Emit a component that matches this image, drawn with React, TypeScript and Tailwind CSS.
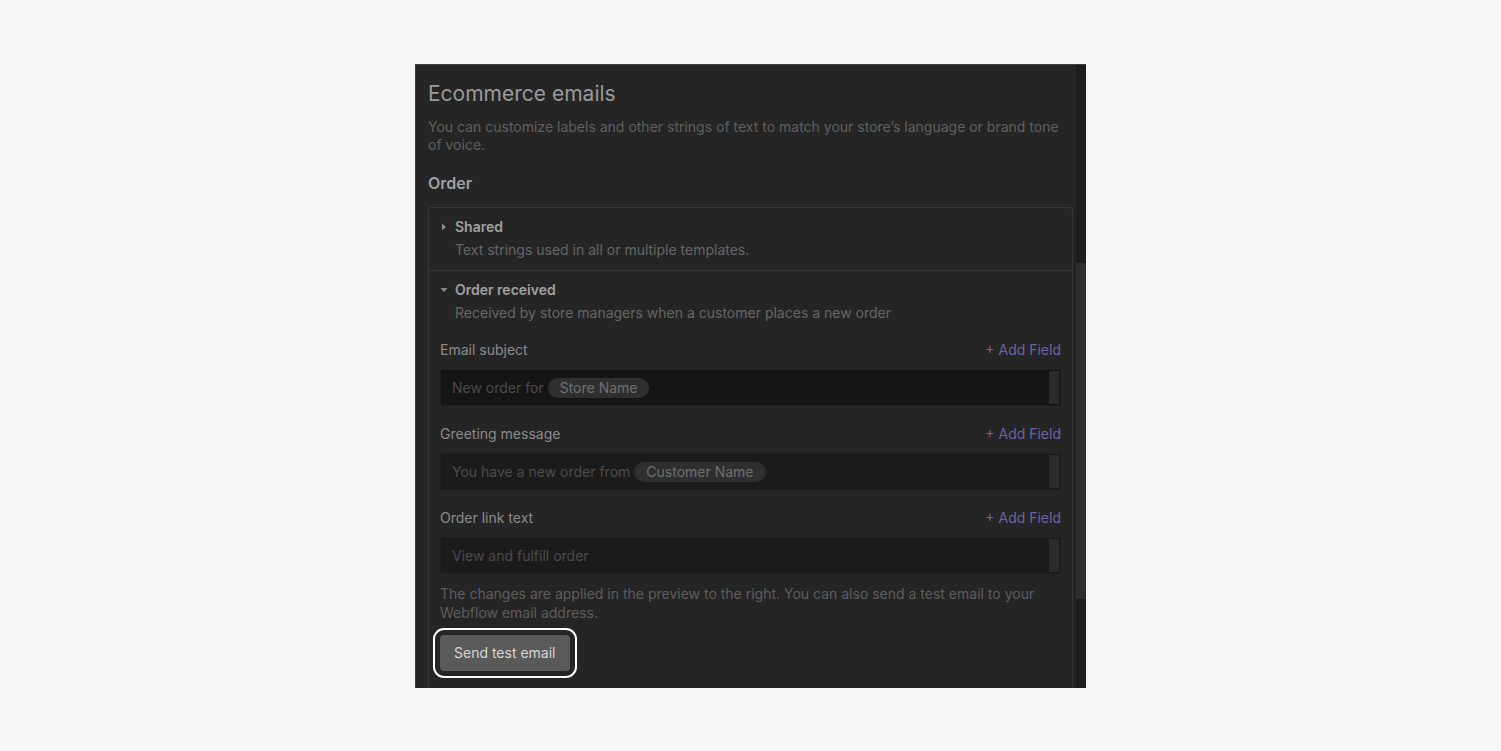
import { ReactNode } from 'react'

function Caret({ open }: { open?: boolean }) {
  return (
    <svg width="8" height="8" viewBox="0 0 8 8" className="shrink-0 text-[#8a8a8a]">
      {open ? <path d="M0.5 2 L7.5 2 L4 6 Z" fill="currentColor" /> : <path d="M2 0.5 L6 4 L2 7.5 Z" fill="currentColor" />}
    </svg>
  )
}

function Pill({ children }: { children: ReactNode }) {
  return (
    <span className="ml-1 inline-flex h-[20px] items-center rounded-full bg-[#2f2f2f] px-3 text-[#6f6f6f]">{children}</span>
  )
}

function Field({ label, dark, children }: { label: string; dark?: boolean; children: ReactNode }) {
  return (
    <div>
      <div className="flex h-5 items-center justify-between text-sm leading-5">
        <span className="text-[#8b8b8b]">{label}</span>
        <span className="text-[#6c63a6]">+ Add Field</span>
      </div>
      <div
        className={`mt-[9px] flex h-[37px] items-center rounded-[2px] border border-[#1f1f1f] pl-[11px] pr-[1px] text-sm ${
          dark ? 'bg-[#151515]' : 'bg-[#1b1b1b]'
        }`}
      >
        <div className="flex flex-1 items-center text-[#4b4b4b]">{children}</div>
        <div className="h-[33px] w-[10px] rounded-[1px] bg-[#2b2b2b]" />
      </div>
    </div>
  )
}

export default function App() {
  return (
    <div
      className="flex h-[751px] w-full items-start justify-center bg-[#f5f6f8] pt-16"
      style={{ fontFamily: 'Inter, "Noto Sans", sans-serif' }}
    >
      <div className="flex h-[624px] w-[671px] overflow-hidden border-t border-l border-[#3c3c3c] bg-[#252525]">
        <div className="flex-1 pl-3 pr-[1px] pt-[15px]">
          <h1 className="text-[21px] leading-7 text-[#9a9a9a]">Ecommerce emails</h1>
          <p className="mt-[10px] pr-3 text-sm leading-[18px] text-[#5f5f5f]">
            You can customize labels and other strings of text to match your store’s language or brand tone of voice.
          </p>
          <h2 className="mt-[17px] text-base font-semibold leading-6 text-[#a0a0a0]">Order</h2>

          <div className="mt-3 rounded-t-[3px] border border-[#363636]">
            <div className="border-b border-[#363636] px-[11px] pb-[10px] pt-[9px]">
              <div className="flex h-5 items-center gap-[7px] text-sm font-semibold text-[#a0a0a0]">
                <Caret />
                Shared
              </div>
              <div className="mt-[3px] pl-[15px] text-sm leading-5 text-[#666666]">
                Text strings used in all or multiple templates.
              </div>
            </div>

            <div className="px-[11px] pt-[9px] pb-10">
              <div className="flex h-5 items-center gap-[7px] text-sm font-semibold text-[#a0a0a0]">
                <Caret open />
                Order received
              </div>
              <div className="mt-[3px] pl-[15px] text-sm leading-5 text-[#666666]">
                Received by store managers when a customer places a new order
              </div>

              <div className="mt-[17px] flex flex-col gap-[18px]">
                <Field label="Email subject" dark>
                  New order for <Pill>Store Name</Pill>
                </Field>
                <Field label="Greeting message">
                  You have a new order from <Pill>Customer Name</Pill>
                </Field>
                <Field label="Order link text">View and fulfill order</Field>
              </div>

              <p className="mt-[10px] text-sm leading-[19px] text-[#5d5d5d]">
                The changes are applied in the preview to the right. You can also send a test email to your Webflow email
                address.
              </p>

              <button className="mt-[13px] h-[36px] rounded-[4px] bg-[#5a5a5a] px-[14px] text-sm text-[#d6d6d6] outline-2 outline-offset-[5px] outline-white">
                Send test email
              </button>
            </div>
          </div>
        </div>

        <div className="ml-[2px] flex w-[10px] flex-col bg-[#1d1d1d]">
          <div className="mt-[198px] h-[336px] bg-[#2e2e2e]" />
        </div>
      </div>
    </div>
  )
}
